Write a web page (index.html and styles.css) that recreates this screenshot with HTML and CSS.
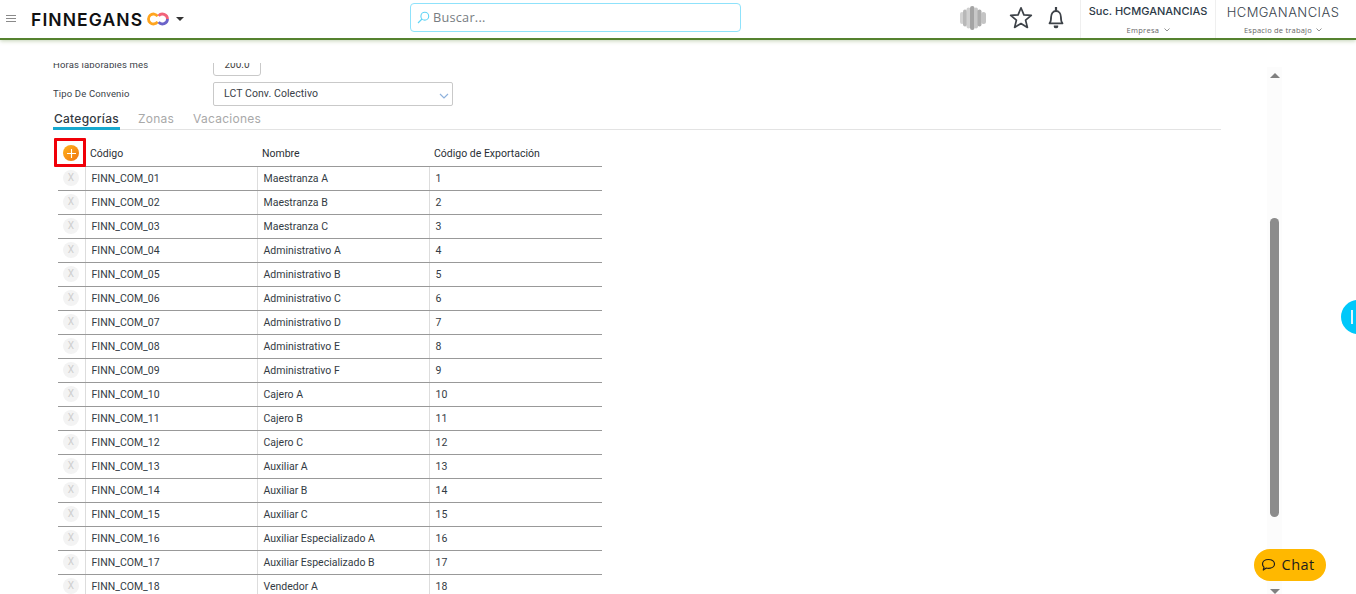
FILE: index.html
```html
<!DOCTYPE html>
<html lang="es">
<head>
<meta charset="utf-8">
<title>Convenio</title>
<link rel="stylesheet" href="styles.css">
</head>
<body>
<header class="topbar">
  <div class="brand">
    <svg class="menu-icon" width="10" height="8" viewBox="0 0 10 8"><path d="M0 .5h10M0 3.500h10M0 6.500h10" stroke="#8a8a8a" fill="none"/></svg>
    <span class="logo-text">FINNEGANS</span>
    <svg class="logo-mark" width="22" height="14" viewBox="0 0 22 14">
      <path d="M10.600 4.200A5 5 0 1 0 10.600 9.800" stroke="#ffa51f" stroke-width="2.800" fill="none"/>
      <path d="M11.600 3.900A5 5 0 0 1 20.500 7" stroke="#f2637a" stroke-width="2.800" fill="none"/>
      <path d="M20.500 7A5 5 0 0 1 11.600 10.100" stroke="#6b63c9" stroke-width="2.800" fill="none"/>
    </svg>
    <span class="caret"></span>
  </div>
  <div class="search">
    <svg width="13" height="13" viewBox="0 0 13 13"><circle cx="7.800" cy="5.200" r="3.900" stroke="#5fd4f5" stroke-width="1.100" fill="none"/><path d="M5 8 1 12" stroke="#5fd4f5" stroke-width="1.100"/></svg>
    <span class="search-text">Buscar...</span>
  </div>
  <div class="actions">
    <svg class="blob" width="28" height="26" viewBox="0 0 28 26">
      <defs><filter id="soft" x="-10%" y="-10%" width="120%" height="120%"><feGaussianBlur stdDeviation="0.6"/></filter></defs>
      <g filter="url(#soft)">
        <rect x="1" y="7" width="4" height="12" rx="2" fill="#d2d2d2"/>
        <rect x="4" y="4.500" width="4" height="17" rx="2" fill="#b8b8b8"/>
        <rect x="7.500" y="2.500" width="4" height="21" rx="2" fill="#d0d0d0"/>
        <rect x="11" y="1" width="4.500" height="24" rx="2.200" fill="#a4a4a4"/>
        <rect x="15" y="2.500" width="4" height="21" rx="2" fill="#c8c8c8"/>
        <rect x="18.500" y="4.500" width="4" height="17" rx="2" fill="#adadad"/>
        <rect x="22" y="7" width="5" height="12" rx="2.500" fill="#c4c4c4"/>
      </g>
    </svg>
    <svg class="star" width="24" height="23" viewBox="0 0 24 23"><path d="M12 1.800 14.900 8.900 22.300 9.400 16.600 14.200 18.400 21.400 12 17.500 5.600 21.400 7.400 14.200 1.700 9.400 9.100 8.900Z" fill="none" stroke="#3d4248" stroke-width="1.700" stroke-linejoin="round"/></svg>
    <svg class="bell" width="20" height="23" viewBox="0 0 20 23"><path d="M3.500 17.300c1.400-1.500 1.600-3 1.600-6.300 0-3.400 2-6 4.900-6s4.900 2.600 4.900 6c0 3.300.2 4.800 1.600 6.300Z" fill="none" stroke="#3d4248" stroke-width="1.800" stroke-linejoin="round"/><path d="M10 1v4" stroke="#3d4248" stroke-width="2.200"/><path d="M7.800 19.500h4.400v1.300a2.200 1.500 0 0 1-4.400 0z" fill="#3d4248"/></svg>
    <div class="org org-branch">
      <span class="org-name org-name-dark">Suc. HCMGANANCIAS</span>
      <span class="org-sub">Empresa <svg width="6" height="4" viewBox="0 0 6 4"><path d="M.5.500 3 3l2.500-2.500" stroke="#777" fill="none" stroke-width=".8"/></svg></span>
    </div>
    <div class="org org-space">
      <span class="org-name">HCMGANANCIAS</span>
      <span class="org-sub">Espacio de trabajo <svg width="6" height="4" viewBox="0 0 6 4"><path d="M.5.500 3 3l2.500-2.500" stroke="#777" fill="none" stroke-width=".8"/></svg></span>
    </div>
  </div>
</header>

<main class="workspace">
  <section class="content">
    <div class="form-scroll">
      <div class="field field-hours">
        <label class="field-label">Horas laborables mes</label>
        <div class="input-small">200.0</div>
      </div>
      <div class="field field-agreement">
        <label class="field-label">Tipo De Convenio</label>
        <div class="select">
          <span>LCT Conv. Colectivo</span>
          <svg width="10" height="6" viewBox="0 0 10 6"><path d="M1 1l4 4 4-4" stroke="#8fb2dc" stroke-width="1.200" fill="none"/></svg>
        </div>
      </div>
      <nav class="tabs">
        <span class="tab tab-active">Categorías</span>
        <span class="tab">Zonas</span>
        <span class="tab">Vacaciones</span>
      </nav>
      <table class="grid">
        <colgroup><col class="w-action"><col class="w-col"><col class="w-col"><col class="w-last"></colgroup>
        <thead>
          <tr>
            <th class="col-action"><span class="add-box"><span class="add-btn"><svg width="9" height="9" viewBox="0 0 9 9"><path d="M4.500 0v9M0 4.500h9" stroke="#fff" stroke-width="1.100"/></svg></span></span></th>
            <th>Código</th>
            <th>Nombre</th>
            <th>Código de Exportación</th>
          </tr>
        </thead>
        <tbody>
          <tr><td class="cell-action"><span class="del">X</span></td><td>FINN_COM_01</td><td>Maestranza A</td><td>1</td></tr>
          <tr><td class="cell-action"><span class="del">X</span></td><td>FINN_COM_02</td><td>Maestranza B</td><td>2</td></tr>
          <tr><td class="cell-action"><span class="del">X</span></td><td>FINN_COM_03</td><td>Maestranza C</td><td>3</td></tr>
          <tr><td class="cell-action"><span class="del">X</span></td><td>FINN_COM_04</td><td>Administrativo A</td><td>4</td></tr>
          <tr><td class="cell-action"><span class="del">X</span></td><td>FINN_COM_05</td><td>Administrativo B</td><td>5</td></tr>
          <tr><td class="cell-action"><span class="del">X</span></td><td>FINN_COM_06</td><td>Administrativo C</td><td>6</td></tr>
          <tr><td class="cell-action"><span class="del">X</span></td><td>FINN_COM_07</td><td>Administrativo D</td><td>7</td></tr>
          <tr><td class="cell-action"><span class="del">X</span></td><td>FINN_COM_08</td><td>Administrativo E</td><td>8</td></tr>
          <tr><td class="cell-action"><span class="del">X</span></td><td>FINN_COM_09</td><td>Administrativo F</td><td>9</td></tr>
          <tr><td class="cell-action"><span class="del">X</span></td><td>FINN_COM_10</td><td>Cajero A</td><td>10</td></tr>
          <tr><td class="cell-action"><span class="del">X</span></td><td>FINN_COM_11</td><td>Cajero B</td><td>11</td></tr>
          <tr><td class="cell-action"><span class="del">X</span></td><td>FINN_COM_12</td><td>Cajero C</td><td>12</td></tr>
          <tr><td class="cell-action"><span class="del">X</span></td><td>FINN_COM_13</td><td>Auxiliar A</td><td>13</td></tr>
          <tr><td class="cell-action"><span class="del">X</span></td><td>FINN_COM_14</td><td>Auxiliar B</td><td>14</td></tr>
          <tr><td class="cell-action"><span class="del">X</span></td><td>FINN_COM_15</td><td>Auxiliar C</td><td>15</td></tr>
          <tr><td class="cell-action"><span class="del">X</span></td><td>FINN_COM_16</td><td>Auxiliar Especializado A</td><td>16</td></tr>
          <tr><td class="cell-action"><span class="del">X</span></td><td>FINN_COM_17</td><td>Auxiliar Especializado B</td><td>17</td></tr>
          <tr><td class="cell-action"><span class="del">X</span></td><td>FINN_COM_18</td><td>Vendedor A</td><td>18</td></tr>
        </tbody>
      </table>
    </div>
  </section>
  <aside class="scrollbar">
    <span class="arrow-up"></span>
    <span class="thumb"></span>
    <span class="arrow-down"></span>
  </aside>
</main>

<div class="side-tab"><span class="side-tab-bar"></span></div>
<div class="chat">
  <svg width="15" height="14" viewBox="0 0 15 14"><path d="M7.500 1.500c3.400 0 6 1.900 6 4.400s-2.600 4.400-6 4.400c-.8 0-1.500-.1-2.200-.3L2.300 12l.7-2.900C2 8.300 1.500 7.200 1.500 5.900c0-2.500 2.600-4.400 6-4.400Z" fill="none" stroke="#1d1d1d" stroke-width="1.200" stroke-linejoin="round"/></svg>
  <span class="chat-text">Chat</span>
</div>
</body>
</html>
```
FILE: styles.css
```css
* { box-sizing: border-box; }
html, body { margin: 0; height: 100%; overflow: hidden; background: #fff; }
body { font-family: Roboto, "Liberation Sans", sans-serif; color: #333; position: relative; }

.topbar {
  height: 40px;
  display: flex;
  align-items: center;
  border-bottom: 2px solid #55822f;
  box-shadow: 0 1px 4px rgba(85, 130, 47, .35);
  background: #fff;
  position: relative;
  z-index: 2;
}
.brand { width: 410px; display: flex; align-items: center; padding-left: 6px; flex: none; }
.menu-icon { flex: none; }
.logo-text { margin-left: 15px; font-family: Inter, sans-serif; font-weight: 600; font-size: 17.5px; letter-spacing: 1.1px; color: #111; }
.logo-mark { margin-left: 4px; }
.caret { margin-left: 7px; border: 4px solid transparent; border-top: 4px solid #333; border-bottom: 0; }

.search {
  width: 331px;
  height: 29px;
  border: 1px solid #8fe2fb;
  border-radius: 4px;
  display: flex;
  align-items: center;
  padding-left: 6px;
  gap: 3px;
  margin-top: -3px;
  flex: none;
}
.search-text { font-family: "Open Sans", sans-serif; font-size: 12.7px; color: #777d82; letter-spacing: .25px; padding-bottom: 2px; }

.actions { flex: 1; display: flex; justify-content: flex-end; align-items: center; height: 38px; }
.blob { margin-right: 22px; margin-bottom: 2px; }
.star { margin-right: 13px; margin-bottom: 3px; }
.bell { margin-right: 14px; margin-bottom: 3px; }
.org {
  height: 38px;
  border-left: 1px solid #efefef;
  display: flex;
  flex-direction: column;
  align-items: center;
  padding-top: 5px;
}
.org-branch { width: 135px; padding-top: 4px; }
.org-space { width: 141px; padding-right: 6px; }
.org-name { font-family: Inter, sans-serif; font-size: 13px; font-weight: 300; line-height: 15px; color: #38434d; letter-spacing: .45px; }
.org-name-dark { font-weight: 500; font-size: 11px; line-height: 14px; color: #2d3a47; letter-spacing: 0; }
.org-sub { margin-top: 7px; font-family: "Open Sans", sans-serif; font-size: 7.5px; line-height: 10px; color: #666; letter-spacing: .3px; }
.org-space .org-sub { margin-top: 5px; letter-spacing: .2px; }
.org-sub svg { margin-left: 2px; vertical-align: 1px; }

.workspace { display: flex; height: 554px; }
.content { width: 1221px; padding: 23px 0 0 53px; flex: none; }
.form-scroll { height: 531px; overflow: hidden; }

.field { display: flex; align-items: center; }
.field-hours { height: 13px; margin-bottom: 6px; align-items: flex-start; }
.field-hours .field-label { margin-top: -4px; }
.field-label { width: 160px; flex: none; font-size: 9.5px; color: #3a4148; letter-spacing: .15px; }
.input-small {
  width: 48px;
  height: 23px;
  margin-top: -10px;
  border: 1px solid #c9c9c9;
  border-radius: 0 0 3px 3px;
  font-size: 10px;
  text-align: center;
  line-height: 21px;
  color: #444;
}
.select {
  width: 240px;
  height: 24px;
  border: 1px solid #c9c9c9;
  border-radius: 2px;
  display: flex;
  align-items: center;
  justify-content: space-between;
  padding: 0 3px 2px 10px;
  font-size: 10.5px;
  color: #3a4148;
  letter-spacing: .08px;
}
.select svg { margin-top: 5px; }
.field-agreement { margin-bottom: 3px; }
.field-agreement .field-label { padding-bottom: 2px; }

.tabs { display: flex; gap: 17px; height: 21px; border-bottom: 1px solid #e3e3e3; width: 1168px; }
.tab { font-family: Inter, sans-serif; font-size: 12px; line-height: 20px; color: #a9a9a9; padding: 0 1px; height: 21px; letter-spacing: .25px; }
.tab-active { color: #34393f; border-bottom: 3px solid #17a9cf; font-weight: 500; letter-spacing: .25px; }

.grid { border-collapse: collapse; table-layout: fixed; width: 544px; margin: 9px 0 0 5px; font-size: 10.5px; color: #333b44; }
.w-action { width: 27px; }
.w-col { width: 172px; }
.w-last { width: 173px; }
.grid th { height: 27px; font-weight: 400; text-align: left; border-bottom: 1px solid #999; padding: 2px 0 0 5px; color: #2a2f35; font-size: 10.5px; }
.grid .col-action { padding: 0; position: relative; }
.add-box {
  position: absolute;
  left: -4px;
  top: -1px;
  display: flex;
  width: 32px;
  height: 29px;
  border: 3px solid #f00008;
  border-radius: 1px;
  align-items: center;
  padding: 1px 0 0 6px;
}
.add-btn {
  width: 16px;
  height: 16px;
  border-radius: 50%;
  background: linear-gradient(135deg, #ffb41e, #f0740f);
  display: flex;
  align-items: center;
  justify-content: center;
  flex: none;
}
.grid td { height: 24px; padding: 0 0 0 6px; border-bottom: 1px solid #999; border-left: 1px solid #ddd; white-space: nowrap; }
.grid td.cell-action { border-left: 0; padding: 0 0 0 5px; }
.del {
  display: block;
  width: 16px;
  height: 16px;
  border-radius: 50%;
  background: #f3f3f3;
  color: #cfcfcf;
  font-size: 10px;
  line-height: 16px;
  text-align: center;
}

.scrollbar { width: 15px; margin: 27px 0 0 46px; background: #fcfcfc; height: 527px; flex: none; display: flex; flex-direction: column; align-items: center; }
.arrow-up { margin-top: 6px; border: 5px solid transparent; border-bottom: 5px solid #808080; border-top: 0; }
.thumb { width: 9px; height: 299px; margin-top: 140px; background: #8c8c8c; border-radius: 5px; }
.arrow-down { margin-top: auto; border: 5px solid transparent; border-top: 5px solid #808080; border-bottom: 0; }

.side-tab { position: absolute; left: 1341px; top: 300px; width: 34px; height: 34px; border-radius: 50%; background: #00c8fa; }
.side-tab-bar { position: absolute; left: 10px; top: 10px; width: 2px; height: 14px; background: #dff7ff; }

.chat {
  position: absolute;
  left: 1254px;
  top: 549px;
  width: 72px;
  height: 32px;
  border-radius: 16px;
  background: #ffb800;
  display: flex;
  align-items: center;
  padding-left: 6.5px;
  gap: 6px;
  font-family: "Open Sans", sans-serif;
  font-size: 14.5px;
  font-weight: 500;
  color: #1d1d1d;
  letter-spacing: .5px;
}
.chat-text { padding-bottom: 2px; }
```
